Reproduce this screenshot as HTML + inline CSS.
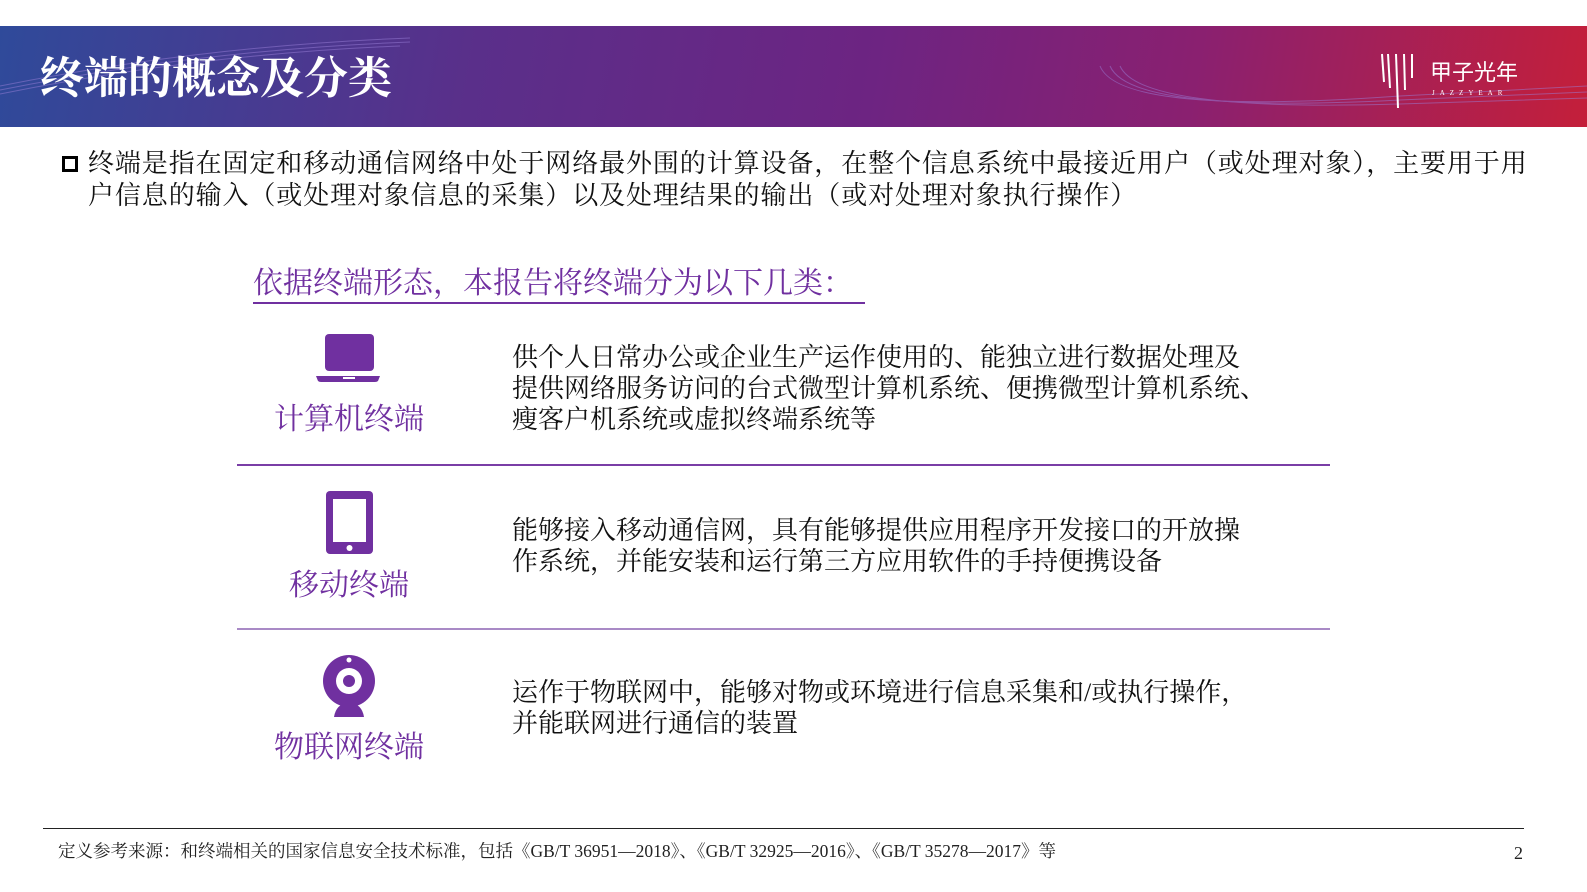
<!DOCTYPE html>
<html><head><meta charset="utf-8"><style>
body{margin:0;width:1587px;height:892px;background:#fff;position:relative;overflow:hidden;font-family:"Liberation Serif","Noto Serif CJK SC",serif;}
.hdr{position:absolute;left:0;top:26px;width:1587px;height:101px;background:linear-gradient(100deg,#2f4a9a 0%,#5a2f8a 30%,#6d2482 55%,#8a2070 75%,#c41f3a 100%);overflow:hidden}
.t{position:absolute;left:40px;top:20px;color:#fff;font-size:44px;line-height:56px;font-weight:bold;font-family:"Noto Serif CJK SC",serif}
.abs{position:absolute}
.p{font-size:26px;color:#111;line-height:32px;letter-spacing:0.9px;white-space:nowrap}
.pur{color:#7030a0}
.line{position:absolute;height:2px;background:#7a3ea6}
.lbl{position:absolute;font-size:30px;color:#7030a0;text-align:center;width:240px}
.desc{position:absolute;left:512px;font-size:26px;line-height:31px;color:#111}
</style></head><body>
<div class="hdr">
<svg class="abs" style="left:0;top:0" width="1587" height="101">
<g fill="none" stroke="#9a7fd8" stroke-width="1" opacity=".5">
<path d="M0 60 Q200 20 410 12"/><path d="M0 64 Q200 24 410 16"/><path d="M0 68 Q200 28 400 20"/>
<path d="M1100 40 Q1120 90 1400 70 L1587 60"/><path d="M1110 40 Q1130 88 1400 74 L1587 66"/><path d="M1120 40 Q1140 86 1400 78 L1587 72"/>
</g>
<g stroke="#fff" stroke-width="2"><line x1="1382" y1="28" x2="1384" y2="56"/><line x1="1388" y1="28" x2="1390" y2="62"/><line x1="1396" y1="28" x2="1398" y2="82"/><line x1="1404" y1="28" x2="1405" y2="64"/><line x1="1412" y1="28" x2="1412" y2="52"/></g>
<text x="1430" y="54" fill="#fff" font-size="22" font-family="Noto Sans CJK SC,sans-serif">甲子光年</text>
<text x="1432" y="69" fill="#fff" font-size="7" letter-spacing="5" font-family="Liberation Serif,serif">JAZZYEAR</text>
</svg>
<div class="t">终端的概念及分类</div>
</div>
<div class="abs" style="left:62px;top:156px;width:16px;height:16px;border:3px solid #000;box-sizing:border-box"></div>
<div class="abs p" style="left:88px;top:148px">终端是指在固定和移动通信网络中处于网络最外围的计算设备，在整个信息系统中最接近用户（或处理对象），主要用于用<br>户信息的输入（或处理对象信息的采集）以及处理结果的输出（或对处理对象执行操作）</div>
<div class="abs pur" style="left:253px;top:266px;font-size:30px;border-bottom:2px solid #7030a0;padding-right:12px;line-height:36px">依据终端形态，本报告将终端分为以下几类：</div>
<svg class="abs" style="left:316px;top:334px" width="66" height="52"><rect x="9" y="0" width="49" height="37" rx="4" fill="#7030a0"/><path d="M0 42 H64 L62 47 Q61 48 59 48 H5 Q3 48 2 47Z" fill="#7030a0"/><rect x="27" y="43" width="12" height="2" fill="#fff"/></svg>
<div class="lbl" style="left:229px;top:394px">计算机终端</div>
<div class="desc" style="top:342px">供个人日常办公或企业生产运作使用的、能独立进行数据处理及<br>提供网络服务访问的台式微型计算机系统、便携微型计算机系统、<br>瘦客户机系统或虚拟终端系统等</div>
<div class="line" style="left:237px;top:464px;width:1093px"></div>
<svg class="abs" style="left:326px;top:491px" width="48" height="64"><rect x="0" y="0" width="47" height="63" rx="4" fill="#7030a0"/><rect x="7" y="8" width="33" height="43" fill="#fff"/><circle cx="23.5" cy="57" r="3" fill="#fff"/></svg>
<div class="lbl" style="left:229px;top:560px">移动终端</div>
<div class="desc" style="top:515px">能够接入移动通信网，具有能够提供应用程序开发接口的开放操<br>作系统，并能安装和运行第三方应用软件的手持便携设备</div>
<div class="line" style="left:237px;top:628px;width:1093px;background:#a98ac6"></div>
<svg class="abs" style="left:322px;top:654px" width="54" height="64"><circle cx="27" cy="27" r="26" fill="#7030a0"/><circle cx="27" cy="27" r="13" fill="#fff"/><circle cx="27" cy="27" r="6" fill="#7030a0"/><circle cx="27" cy="6" r="2.5" fill="#fff"/><path d="M12 63 Q14 50 27 48 Q40 50 42 63Z" fill="#7030a0"/></svg>
<div class="lbl" style="left:229px;top:722px">物联网终端</div>
<div class="desc" style="top:677px">运作于物联网中，能够对物或环境进行信息采集和/或执行操作，<br>并能联网进行通信的装置</div>
<div class="abs" style="left:43px;top:828px;width:1481px;height:1px;background:#222"></div>
<div class="abs" style="left:58px;top:838px;font-size:17.5px;color:#222">定义参考来源：和终端相关的国家信息安全技术标准，包括《GB/T 36951—2018》、《GB/T 32925—2016》、《GB/T 35278—2017》等</div>
<div class="abs" style="left:1514px;top:843px;font-size:18px;color:#222">2</div>
</body></html>
